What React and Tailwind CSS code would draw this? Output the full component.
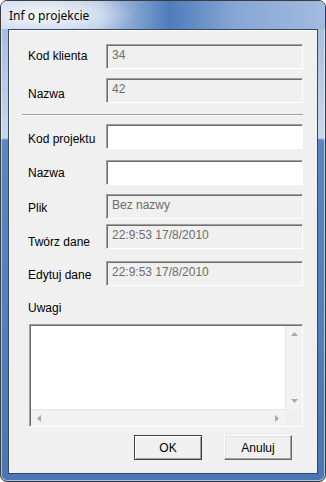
import React from "react";

const rows = [
    { label: "Kod klienta", value: "34", top: "mt-[14px]", lab: "pt-[5px]", ro: true },
    { label: "Nazwa", value: "42", top: "mt-[9px]", lab: "pt-[9px]", ro: true },
    "sep",
    { label: "Kod projektu", value: "", top: "mt-[8px]", lab: "pt-[8px]" },
    { label: "Nazwa", value: "", top: "mt-[11px]", lab: "pt-[6px]" },
    { label: "Plik", value: "Bez nazwy", top: "mt-[9px]", lab: "pt-[7px]", ro: true },
    { label: "Twórz dane", value: "22:9:53 17/8/2010", top: "mt-[5px]", lab: "pt-[11px]", ro: true },
    { label: "Edytuj dane", value: "22:9:53 17/8/2010", top: "mt-[12px]", lab: "pt-[7px]", ro: true },
];

function Arrow({ dir }) {
    const pts = {
        up: "0,4 3.5,0 7,4",
        down: "0,0 3.5,4 7,0",
        left: "4,0 0,3.5 4,7",
        right: "0,0 4,3.5 0,7",
    }[dir];
    const vert = dir === "up" || dir === "down";
    return (
        <svg width={vert ? 7 : 4} height={vert ? 4 : 7} className="block">
            <polygon points={pts} fill="#a8a8a8" />
        </svg>
    );
}

function Field({ value, ro }) {
    return (
        <div
            className={
                "w-[197px] h-[25px] border border-t-[#a0a0a0] border-l-[#a0a0a0] border-b-[#ffffff] border-r-[#ffffff] " +
                "shadow-[inset_1px_1px_0_#6d6d6d] pl-[5px] pt-[3px] leading-[14px] text-[#6d6d6d] " +
                (ro ? "bg-[#f0f0f0]" : "bg-white")
            }
        >
            {value}
        </div>
    );
}

function Button({ label, primary }) {
    return (
        <button
            className={
                "w-[68px] h-[25px] bg-[#f0f0f0] text-black leading-[14px] " +
                (primary
                    ? "border border-[#404040] shadow-[inset_1px_1px_0_#ffffff,inset_-1px_-1px_0_#a0a0a0]"
                    : "border border-t-[#ffffff] border-l-[#ffffff] border-b-[#696969] border-r-[#696969] shadow-[inset_-1px_-1px_0_#a0a0a0,inset_1px_1px_0_#e3e3e3]")
            }
        >
            {label}
        </button>
    );
}

export default function App() {
    return (
        <div
            className={
                "w-[326px] h-[482px] flex flex-col rounded-[7px] border border-[#3c3c3c] overflow-hidden " +
                "bg-[linear-gradient(to_bottom,#9fb8dd_0px,#c9d7ec_137px,#5c86c2_139px,#4b76b6_100%)] " +
                "shadow-[inset_0_0_0_1px_rgba(255,255,255,0.55)]"
            }
            style={{ fontFamily: '"Liberation Sans", Arial, sans-serif', fontSize: "12px" }}
        >
            <div
                className={
                    "h-[28px] shrink-0 pl-[8px] flex items-center " +
                    "bg-[radial-gradient(ellipse_90px_22px_at_45px_14px,rgba(255,255,255,0.85),rgba(255,255,255,0)),linear-gradient(to_right,#cad8ec_0%,#b9cbe6_30%,#4e7cbc_52%,#86a6d5_72%,#a2bbe0_100%)]"
                }
            >
                <span
                    className="text-[12px] text-black pt-[2px]"
                    style={{ fontFamily: '"Segoe UI", "Noto Sans", sans-serif' }}
                >
                    Inf o projekcie
                </span>
            </div>
            <div className="flex-1 mx-[7px] mb-[7px] border border-[#34466a] bg-[#f0f0f0] shadow-[inset_1px_1px_0_#ffffff] flex flex-col">
                {rows.map((r, i) =>
                    r === "sep" ? (
                        <div key={i} className="mt-[11px] ml-[13px] w-[281px] h-[2px] border-t border-t-[#a0a0a0] border-b border-b-[#ffffff]" />
                    ) : (
                        <div key={i} className={"flex pl-[19px] " + r.top}>
                            <div className={"w-[78px] leading-[14px] text-black " + r.lab}>
                                {r.label}
                            </div>
                            <Field value={r.value} ro={r.ro} />
                        </div>
                    )
                )}
                <div className="mt-[15px] pl-[19px] leading-[14px] text-black">Uwagi</div>
                <div className="mt-[9px] ml-[20px] w-[274px] h-[103px] border border-t-[#a0a0a0] border-l-[#a0a0a0] border-b-[#ffffff] border-r-[#ffffff] shadow-[inset_1px_1px_0_#6d6d6d] bg-white flex flex-col pl-[1px] pt-[1px]">
                    <div className="flex flex-1">
                        <div className="flex-1 bg-white" />
                        <div className="w-[17px] bg-[#f2f2f2] border-l border-l-[#e6e6e6] flex flex-col items-center justify-between py-[6px]">
                            <Arrow dir="up" />
                            <Arrow dir="down" />
                        </div>
                    </div>
                    <div className="flex h-[17px]">
                        <div className="flex-1 bg-[#f2f2f2] border-t border-t-[#e6e6e6] flex items-center justify-between px-[6px]">
                            <Arrow dir="left" />
                            <Arrow dir="right" />
                        </div>
                        <div className="w-[17px] bg-[#f0f0f0]" />
                    </div>
                </div>
                <div className="mt-[8px] flex justify-end gap-[22px] pr-[25px]">
                    <Button label="OK" primary />
                    <Button label="Anuluj" />
                </div>
            </div>
        </div>
    );
}
